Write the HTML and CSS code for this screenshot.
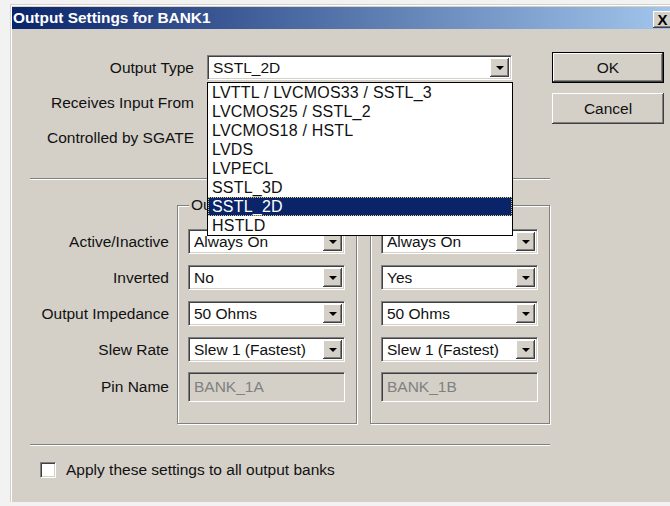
FILE: index.html
```html
<!DOCTYPE html>
<html lang="en">
<head>
<meta charset="utf-8">
<title>Output Settings for BANK1</title>
<link rel="stylesheet" href="styles.css">
</head>
<body>
<div class="window">
  <div class="titlebar">
    <span class="title">Output Settings for BANK1</span>
    <span class="close">X</span>
  </div>
  <div class="client">
    <div class="form">
      <div class="top-fields">
        <span class="lbl">Output Type</span>
        <div class="combo open">
          <span class="value">SSTL_2D</span><span class="arrow"></span>
          <ul class="listbox">
            <li>LVTTL / LVCMOS33 / SSTL_3</li>
            <li>LVCMOS25 / SSTL_2</li>
            <li>LVCMOS18 / HSTL</li>
            <li>LVDS</li>
            <li>LVPECL</li>
            <li>SSTL_3D</li>
            <li class="selected">SSTL_2D</li>
            <li>HSTLD</li>
          </ul>
        </div>
        <span class="lbl">Receives Input From</span>
        <div class="combo"><span class="value">Internal</span><span class="arrow"></span></div>
        <span class="lbl">Controlled by SGATE</span>
        <div class="combo"><span class="value">No</span><span class="arrow"></span></div>
      </div>

      <div class="sep"></div>

      <div class="banks">
        <div class="row-labels">
          <span class="lbl">Active/Inactive</span>
          <span class="lbl">Inverted</span>
          <span class="lbl">Output Impedance</span>
          <span class="lbl">Slew Rate</span>
          <span class="lbl tall">Pin Name</span>
        </div>
        <fieldset class="group">
          <legend>Output A</legend>
          <div class="combo"><span class="value">Always On</span><span class="arrow"></span></div>
          <div class="combo"><span class="value">No</span><span class="arrow"></span></div>
          <div class="combo"><span class="value">50 Ohms</span><span class="arrow"></span></div>
          <div class="combo"><span class="value">Slew 1 (Fastest)</span><span class="arrow"></span></div>
          <div class="textbox disabled">BANK_1A</div>
        </fieldset>
        <fieldset class="group">
          <legend>Output B</legend>
          <div class="combo"><span class="value">Always On</span><span class="arrow"></span></div>
          <div class="combo"><span class="value">Yes</span><span class="arrow"></span></div>
          <div class="combo"><span class="value">50 Ohms</span><span class="arrow"></span></div>
          <div class="combo"><span class="value">Slew 1 (Fastest)</span><span class="arrow"></span></div>
          <div class="textbox disabled">BANK_1B</div>
        </fieldset>
      </div>

      <div class="sep lower"></div>

      <label class="check"><span class="box"></span>Apply these settings to all output banks</label>
    </div>

    <div class="buttons">
      <button class="btn default">OK</button>
      <button class="btn">Cancel</button>
    </div>
  </div>
</div>
</body>
</html>
```

FILE: styles.css
```css
html, body {
  margin: 0;
  padding: 0;
}

body {
  width: 670px;
  height: 506px;
  overflow: hidden;
  background: #f2f2f2;
  font-family: "Liberation Sans", Arial, sans-serif;
  font-size: 15.5px;
  color: #111;
}

/* dialog frame */
.window {
  box-sizing: border-box;
  width: 680px;
  height: 498px;
  margin: 4px 0 0 10px;
  padding: 2px 0 0 1px;
  background: #d4d0c8;
  border-top: 1px solid #d4d0c8;
  border-left: 1px solid #d4d0c8;
  box-shadow: inset 1px 1px 0 #fff;
}

.titlebar {
  display: flex;
  height: 22px;
  background: linear-gradient(to right, #0a246a, #a6caf0);
}

.title {
  flex: 0 0 640px;
  padding-left: 1px;
  line-height: 22px;
  font-weight: bold;
  font-size: 15.4px;
  color: #fff;
}

.close {
  width: 19px;
  height: 17px;
  margin-top: 4px;
  background: #d4d0c8;
  box-shadow: inset -1px -1px 0 #404040, inset 1px 1px 0 #fff,
              inset -2px -2px 0 #808080, inset 2px 2px 0 #d4d0c8;
  font-weight: bold;
  font-size: 15px;
  line-height: 17px;
  text-align: center;
  color: #000;
}

.client {
  display: flex;
}

.form {
  flex: 0 0 540px;
}

/* label + field rows at the top */
.top-fields {
  display: grid;
  grid-template-columns: 183px 305px;
  grid-auto-rows: 25px;
  column-gap: 12px;
  row-gap: 10px;
  margin-top: 26px;
}

.lbl {
  display: flex;
  align-items: center;
  justify-content: flex-end;
  padding-right: 1px;
  white-space: nowrap;
}

/* sunken combo box */
.combo,
.textbox {
  position: relative;
  box-sizing: border-box;
  display: flex;
  align-items: center;
  flex-shrink: 0;
  height: 25px;
  background: #fff;
  border: 1px solid;
  border-color: #808080 #fff #fff #808080;
  box-shadow: inset 1px 1px 0 #404040, inset -1px -1px 0 #d4d0c8;
  padding: 2px;
}

.value {
  flex: 1;
  padding-left: 3px;
  white-space: nowrap;
  overflow: hidden;
}

.arrow {
  position: relative;
  align-self: stretch;
  width: 19px;
  background: #d4d0c8;
  box-shadow: inset -1px -1px 0 #404040, inset 1px 1px 0 #fff,
              inset -2px -2px 0 #808080, inset 2px 2px 0 #d4d0c8;
}

.arrow::after {
  content: "";
  position: absolute;
  left: 50%;
  top: 50%;
  margin: -2px 0 0 -4px;
  border-left: 4px solid transparent;
  border-right: 4px solid transparent;
  border-top: 4px solid #000;
}

/* open drop-down list */
.listbox {
  position: absolute;
  top: 26px;
  left: -1px;
  z-index: 5;
  box-sizing: border-box;
  width: 306px;
  margin: 0;
  padding: 0;
  list-style: none;
  background: #fff;
  border: 1px solid #000;
  font-size: 16px;
  letter-spacing: 0.2px;
}

.listbox li {
  height: 19px;
  line-height: 19px;
  padding-left: 4px;
  white-space: nowrap;
}

.listbox li.selected {
  background: #0a246a;
  color: #fff;
  outline: 1px dotted #d8c870;
  outline-offset: -1px;
}

/* etched separators */
.sep {
  width: 520px;
  height: 0;
  margin: 28px 0 0 18px;
  border-top: 1px solid #808080;
  border-bottom: 1px solid #fff;
}

.sep.lower {
  margin-top: 20px;
}

/* two output banks */
.banks {
  display: flex;
  margin-top: 16px;
}

.row-labels {
  display: flex;
  flex-direction: column;
  flex-shrink: 0;
  gap: 11px;
  width: 157px;
  padding-top: 33px;
  margin-right: 8px;
}

.row-labels .lbl {
  height: 25px;
  padding-right: 0;
}

.row-labels .lbl.tall {
  height: 30px;
  margin-top: -1px;
}

.group {
  display: flex;
  flex-direction: column;
  flex-shrink: 0;
  gap: 11px;
  width: 180px;
  box-sizing: border-box;
  margin: 0 13px 0 0;
  padding: 15px 11px 21px 10px;
  border: 1px solid #808080;
  box-shadow: 1px 1px 0 #fff, inset 1px 1px 0 #fff;
}

.group:last-child {
  margin-right: 0;
}

.group legend {
  padding: 0 2px;
  margin-left: 1px;
  line-height: 18px;
  background: #d4d0c8;
}

.group .combo {
  width: 157px;
}

.textbox {
  width: 157px;
  height: 30px;
  margin-top: -1px;
  padding-left: 5px;
}

.textbox.disabled {
  background: #d4d0c8;
  color: #808080;
}

/* check box row */
.check {
  display: flex;
  align-items: center;
  gap: 10px;
  margin: 15px 0 0 28px;
}

.box {
  box-sizing: border-box;
  width: 16px;
  height: 16px;
  background: #fff;
  border: 1px solid;
  border-color: #808080 #fff #fff #808080;
  box-shadow: inset 1px 1px 0 #404040, inset -1px -1px 0 #d4d0c8;
}

/* OK / Cancel */
.buttons {
  display: flex;
  flex-direction: column;
  gap: 10px;
  margin-top: 23px;
}

.btn {
  box-sizing: border-box;
  width: 112px;
  height: 31px;
  padding: 0;
  font-family: inherit;
  font-size: 15.5px;
  color: #111;
  background: #d4d0c8;
  border: none;
  box-shadow: inset -1px -1px 0 #404040, inset 1px 1px 0 #fff,
              inset -2px -2px 0 #808080, inset 2px 2px 0 #d4d0c8;
}

.btn.default {
  border: 1px solid #000;
}
```
